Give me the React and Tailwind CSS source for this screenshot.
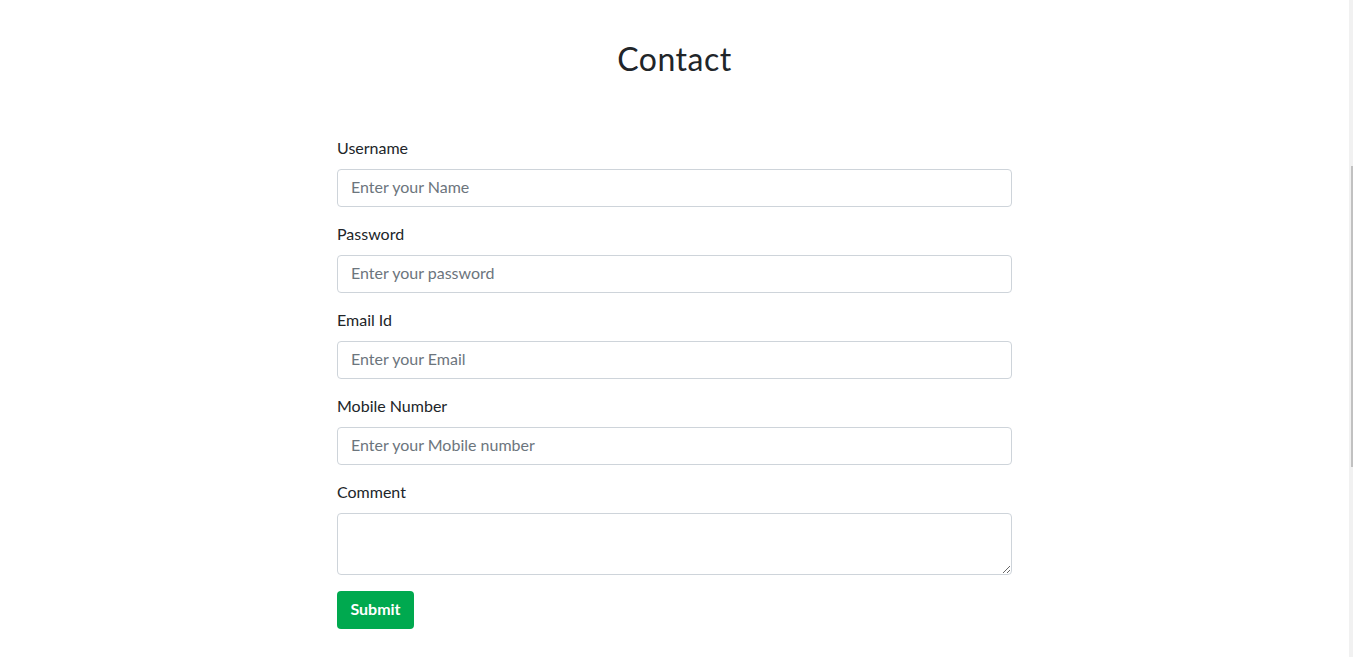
import React, { useState } from "react";

const fields = [
  { label: "Username", placeholder: "Enter your Name", type: "text", name: "username" },
  { label: "Password", placeholder: "Enter your password", type: "password", name: "password" },
  { label: "Email Id", placeholder: "Enter your Email", type: "email", name: "email" },
  { label: "Mobile Number", placeholder: "Enter your Mobile number", type: "text", name: "mobile" },
];

const App = () => {
  const [form, setForm] = useState({ username: "", password: "", email: "", mobile: "", comment: "" });

  const handleChange = (e) => setForm({ ...form, [e.target.name]: e.target.value });

  return (
    <div className="flex h-[657px] overflow-hidden bg-white font-['Lato','Liberation_Sans',sans-serif] text-[#212529]">
      <div className="flex-1">
        <h1 className="pt-[37px] text-center text-[32px] font-normal leading-[44px] tracking-[0.5px]">Contact</h1>

        <form className="mx-auto mt-[55px] w-[675px]" onSubmit={(e) => e.preventDefault()}>
          {fields.map((f) => (
            <div key={f.name} className="mb-[15px]">
              <label className="mb-[9px] block text-[16px] leading-[24px]">{f.label}</label>
              <input
                name={f.name}
                type={f.type}
                value={form[f.name]}
                onChange={handleChange}
                placeholder={f.placeholder}
                className="block h-[38px] w-full rounded-[4px] border border-[#ced4da] px-[13px] pb-[3px] text-[16px] outline-none placeholder:text-[#6c757d]"
              />
            </div>
          ))}

          <div className="mb-4">
            <label className="mb-[9px] block text-[16px] leading-[24px]">Comment</label>
            <textarea
              name="comment"
              rows={2}
              value={form.comment}
              onChange={handleChange}
              className="block h-[62px] w-full rounded-[4px] border border-[#ced4da] px-[13px] py-[6px] text-[16px] outline-none"
            />
          </div>

          <button type="submit" className="h-[38px] w-[77px] rounded-[4px] bg-[#00a94f] pb-[3px] text-[16px] font-bold text-white">
            Submit
          </button>
        </form>
      </div>

      {/* scrollbar */}
      <div className="w-[4px] bg-[#f1f1f1] pt-[166px]">
        <div className="ml-auto h-[301px] w-[2px] bg-[#c1c1c1]" />
      </div>
    </div>
  );
};

export default App;
